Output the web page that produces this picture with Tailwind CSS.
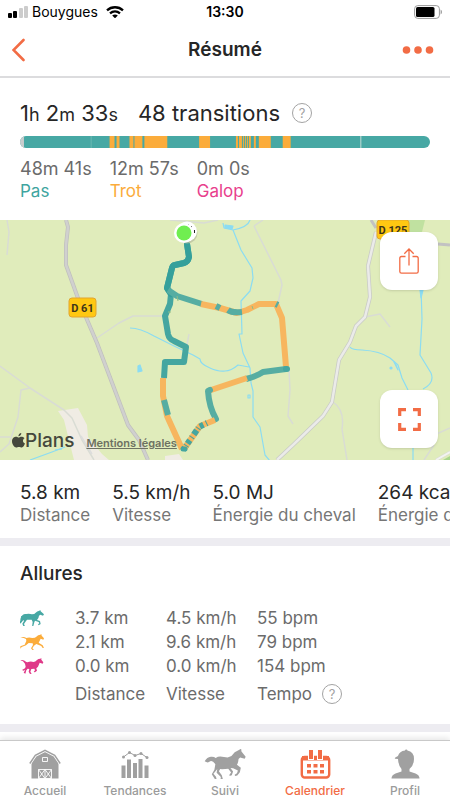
<!DOCTYPE html>
<html lang="fr">

<head>
  <meta charset="UTF-8">
  <meta name="viewport" content="width=device-width, initial-scale=1.0">
  <title>Résumé</title>
  <script src="https://cdn.jsdelivr.net/npm/@tailwindcss/browser@4"></script>
</head>

<body class="bg-white font-['Inter','Liberation_Sans',sans-serif] text-[#262626] min-h-screen flex flex-col overflow-x-hidden">

  <!-- Barre d'état -->
  <div class="grid grid-cols-3 items-center h-6 px-2 text-[13px] text-black">
    <div class="flex items-center gap-1">
      <svg class="w-5 h-3" viewBox="0 0 20 12" aria-hidden="true">
        <rect x="0" y="7" width="4" height="5" rx="1" />
        <rect x="5" y="5" width="4" height="7" rx="1" />
        <rect x="11" y="2" width="4" height="10" rx="1" fill="#ccc" />
        <rect x="16" y="0" width="4" height="12" rx="1" fill="#ccc" />
      </svg>
      <span class="text-sm">Bouygues</span>
      <svg class="w-[18px] h-3 ml-1 shrink-0" viewBox="0 0 18 12" fill="none" stroke="#000" stroke-width="2.3" aria-hidden="true">
        <path d="M1 4.3C5.5.2 12.5.2 17 4.3M4 7.4c3-2.6 7-2.6 10 0" />
        <path d="M6.2 9.6c1.6-1.4 4-1.4 5.6 0L9 12.3z" fill="#000" stroke="none" />
      </svg>
    </div>
    <span class="text-center text-sm font-semibold">13:30</span>
    <svg class="w-7 h-[14px] justify-self-end" viewBox="0 0 28 14" aria-hidden="true">
      <rect x=".6" y=".6" width="24.8" height="12.8" rx="3.2" fill="none" stroke="#999" />
      <rect x="2" y="2" width="18.500" height="10" rx="1.6" />
      <path d="M26.600 4.500q1.400.6 1.400 2.500t-1.400 2.500z" fill="#999" />
    </svg>
  </div>

  <!-- Header -->
  <header class="grid grid-cols-[1fr_auto_1fr] items-center h-[54px] px-2 border-b-2 border-[#dcdcde]">
    <button aria-label="Retour" class="justify-self-start pl-1">
      <svg class="w-4 h-6" viewBox="0 0 16 24" fill="none" stroke="#f26c45" stroke-width="2.600" stroke-linecap="round">
        <path d="M11.500 2 1.500 12l10 10" />
      </svg>
    </button>
    <h1 class="text-[19px] font-semibold">Résumé</h1>
    <button aria-label="Options" class="justify-self-end pr-2">
      <svg class="w-8 h-2" viewBox="0 0 32 8" fill="#f26c45">
        <circle cx="4.500" cy="4" r="3.800" />
        <circle cx="16" cy="4" r="3.800" />
        <circle cx="27.500" cy="4" r="3.800" />
      </svg>
    </button>
  </header>

  <main>
    <!-- Durée et transitions -->
    <section class="px-5 pt-5 h-[142px]">
      <div class="flex items-center h-[30px] text-[22px]">
        <p class="whitespace-nowrap">1<span class="text-lg">h</span> 2<span class="text-lg">m</span> 33<span class="text-lg">s</span></p>
        <p class="ml-5 whitespace-nowrap">48 transitions</p>
        <button aria-label="Aide sur les transitions" class="ml-3 w-5 h-5 rounded-full border border-[#a3a3a3] text-[#a3a3a3] text-[13px] leading-none">?</button>
      </div>
      <svg class="block w-full h-3 mt-2 rounded-full" viewBox="0 0 412 12" preserveAspectRatio="none" aria-hidden="true">
        <rect width="412" height="12" fill="#47a8a4" />
        <rect width="4" height="12" fill="#c9cdce" />
        <path d="M71.500 0v12" stroke="#6bb8b2" />
        <path d="M90 0h5v12h-5zM97 0h3v12h-3zM110 0h4v12h-4zM115 0h8v12h-8zM125 0h23v12h-23zM180 0h11v12h-11zM217 0h2v12h-2zM220 0h3v12h-3zM224 0h1v12h-1zM226 0h1v12h-1zM228 0h1v12h-1zM230 0h2v12h-2zM235 0h2v12h-2zM240 0h12v12h-12zM264 0h8v12h-8z" fill="#fbac3b" />
        <path d="M342.500 0v12" stroke="#c5dcd5" />
      </svg>
      <dl class="flex gap-[18px] mt-[10px] text-lg leading-[22px] text-[#6b6b6b]">
        <div class="flex flex-col-reverse">
          <dt class="text-[17px] leading-[22px] text-[#3ea5a0]">Pas</dt>
          <dd>48m 41s</dd>
        </div>
        <div class="flex flex-col-reverse">
          <dt class="text-[17px] leading-[22px] text-[#fbac3b]">Trot</dt>
          <dd>12m 57s</dd>
        </div>
        <div class="flex flex-col-reverse">
          <dt class="text-[17px] leading-[22px] text-[#e8408c]">Galop</dt>
          <dd>0m 0s</dd>
        </div>
      </dl>
    </section>

    <!-- Carte du parcours -->
    <section class="relative h-60 bg-[#e0ecbb] overflow-hidden">
      <svg class="block w-full h-full" viewBox="0 0 450 240" preserveAspectRatio="xMidYMid slice" fill="none" stroke-linejoin="round" role="img" aria-label="Parcours">
        <path d="M408 0h17l-3 12h-14z" fill="#c0e1a0" />
        <path d="m443 240 7-4v4z" fill="#a9d68c" />
        <path d="m58 191 20-3 9 17 1 12 14 17 7 6H74l-10-40zM165 236l14-2 4 6h-18z" fill="#f0ece4" />

        <!-- Chemins -->
        <g stroke="#d9dcd4" stroke-width="1.500">
          <path d="m7 0 2 12-2 23M170 0l34 3 14-3M97 118l22-15 14-7h32M0 146l30 22 34 22 8 8 10 22 12 20M30 168l-9 2-3 27-9 27-9 8M0 217h10M189 114l-3 16M254 6l27 54 1 5-4 18M254 6l9-6M289 150l1 20-2 26 5 8M365 97l15-3 10 13M333 182q12 8 9 27l5 31M450 208l-18 8M434 225l-10 15" />
          <path d="m81 216 6 10M86 224l6 10" stroke="#ddd" />
        </g>
        <path d="M371 0l5 8M438 24l12 1" stroke="#c2c2c2" stroke-width="3" />
        <path d="m66 0 2 7-2 18v20l13 36 18 42 31 82 11 15 9 20" stroke="#c0c0bd" stroke-width="4" />
        <path d="m66 0 2 7-2 18v20l13 36 18 42 31 82 11 15 9 20" stroke="#d0d0cf" stroke-width="2.500" />
        <path d="m376 12-8 34 2 31-5 20-9 9-6 16-11 18-7 42-9 14-30 29-16 15" stroke="#c9cbc6" stroke-width="4" />
        <path d="m376 12-8 34 2 31-5 20-9 9-6 16-11 18-7 42-9 14-30 29-16 15" stroke="#ebebe9" stroke-width="2.500" />
        <path d="m450 232-14 8" stroke="#d9dcd4" stroke-width="3" />
        <path d="m450 232-14 8" stroke="#f3f3f0" stroke-width="2" />

        <!-- Cours d'eau -->
        <g stroke="#8bdcf2" stroke-width="1.200">
          <path d="M130 108q10 0 24 8l20 10 19 9 7 4q0 5 10 9 9 4 15 3 6 0 13-6l11 2M223 3l1 5 9 2q15-3 17-10M233 10l8 20 11 18 1 10-3 13-9 10 1 33h-3l4 19 7 15 1 15 2 8v26l7 10 5 28 5 6 8 1M350 127q2 3 12 3 18 1 28 8l8 7 4 13 6 12M421 68l1 31-2 36 11 18q4 10-8 16M413 228v12M30 240l22-8 13-5" />
          <path d="m225 5 8 1-1 3-7-1zM138 146l2-1 2 6-4 1zM394 142l2 3 2 5zM420 70h3l-2 8zM55 230l7-1" fill="#8bdcf2" />
          <circle cx="391" cy="148" r="1" fill="#8bdcf2" />
          <path d="M248 175h2v3h-2z" />
        </g>

        <!-- Tracé -->
        <g stroke-width="6">
          <path d="m187 24 2 13q-1 5-5 6l-9 2q-2 0-3 3l-5 20 4 6-1 10-5 12 3 18q1 5 6 7l12 6-2 15h-19l-1 16" stroke="#45a6a0" />
          <path d="m187 24 2 13q-1 5-5 6l-9 2q-2 0-3 3l-5 20 4 6" stroke="#35a09b" stroke-linecap="round" />
          <path d="m168 70 9 6 25 8" stroke="#56ada2" />
          <path d="m201 84 19 4 17 5 10-3 12-6h17l6 14 4 49" stroke="#f7b65f" />
          <path d="m163 158 0 18 4 20 15 33" stroke="#f7b65f" />
          <path d="m164 180 4 15M228 90q4 3 14 2M276 84l2 1M216 86l4 2" stroke="#56ada2" />
          <path d="m252 86 1 3M171 92h-3M177 76l1 5" stroke="#8fbd86" stroke-width="1" />
          <path d="m286 149-23 3q-6 4-17 7" stroke="#56ada2" />
          <path d="m286 149 1 0" stroke="#45a6a0" stroke-linecap="round" />
          <path d="m247 158-39 13" stroke="#f7b65f" />
          <path d="m210 170-2 1q1 16 8 28" stroke="#56ada2" stroke-linecap="round" />
          <path d="m215 200-15 6-16 23" stroke="#f7b65f" />
          <path d="m207 203-8 4-16 23" stroke="#45a6a0" stroke-dasharray="1 3 4 2 1 2 5 3" />
          <path d="m183 229 2 0" stroke="#45a6a0" stroke-width="5" stroke-linecap="round" />
        </g>

        <!-- Arrivée et départ -->
        <circle cx="187" cy="13" r="10.500" fill="#b6bd9d" opacity=".7" />
        <circle cx="187" cy="11.500" r="10" fill="#fff" />
        <path d="M188 4h1v1h-1zM191 6h1v2h-1zM194 10h1v3h-1z" fill="#222" />
        <circle cx="184" cy="13" r="10" fill="#fff" />
        <circle cx="184" cy="13" r="7.500" fill="#70ee50" />

        <!-- Panneaux routiers -->
        <g stroke="#e2a52f" fill="#ffc812">
          <rect x="69" y="78" width="27" height="19" rx="3" />
          <rect x="377" y="0" width="32" height="19" rx="3" />
        </g>
        <g font-family="Roboto, sans-serif" font-size="11" font-weight="700" fill="#3d3519" text-anchor="middle">
          <text x="82.500" y="92">D 61</text>
          <text x="393" y="14">D 125</text>
        </g>
      </svg>

      <div class="absolute left-3 bottom-[9px] flex items-center text-[#45483c]">
        <svg class="w-[13px] h-[15px]" viewBox="0 0 13 15" fill="currentColor" aria-hidden="true">
          <path d="M9.300 0c.1 1.800-1.300 3.300-2.900 3.300C6.200 1.700 7.700.2 9.300 0zM12.500 5.200c-2.200 1.300-1.900 4.300.5 5.300-.6 1.700-1.900 4-3.200 4-1 0-1.500-.6-2.800-.6s-1.900.6-2.800.6C2.300 14.500 0 11.300 0 8.300c0-4.500 4.400-5.200 5.700-4.100.6.4 1.200.4 1.900 0 1.700-.9 3.900-.4 4.900 1z" />
        </svg>
        <span class="text-[19px] leading-5 font-medium">Plans</span>
        <a href="#" class="ml-3 mt-1 text-[11px] font-semibold underline text-[#6d7162]">Mentions légales</a>
      </div>

      <button aria-label="Partager" class="absolute right-3 top-3 w-[58px] h-[58px] rounded-xl bg-white shadow-sm flex items-center justify-center">
        <svg class="w-5 h-[26px]" viewBox="0 0 20 26" fill="none" stroke="#f26c45" stroke-width="1.300">
          <path d="M6.500 8.500H2.500Q.8 8.500.8 10.200v13.300q0 1.700 1.700 1.700h15q1.700 0 1.700-1.700V10.200q0-1.700-1.700-1.700h-4M10 17.500V1.200M5.300 5.700 10 1l4.700 4.700" />
        </svg>
      </button>
      <button aria-label="Plein écran" class="absolute right-3 bottom-3 w-[58px] h-[58px] rounded-xl bg-white shadow-sm flex items-center justify-center">
        <svg class="w-[23px] h-[23px]" viewBox="0 0 23 23" fill="none" stroke="#f26c45" stroke-width="3.200">
          <path d="M8 1.700H1.700V8M15 1.700h6.300V8M1.700 15v6.300H8M21.300 15v6.300H15" />
        </svg>
      </button>
    </section>

    <!-- Statistiques -->
    <section class="overflow-hidden border-b-8 border-[#edecf1] h-[86px] pt-[21px] pl-5">
      <dl class="flex gap-[22px] whitespace-nowrap text-[17px] leading-[23px]">
        <div class="flex flex-col-reverse shrink-0">
          <dt class="text-[#767676]">Distance</dt>
          <dd class="text-[19px]">5.8 km</dd>
        </div>
        <div class="flex flex-col-reverse shrink-0">
          <dt class="text-[#767676]">Vitesse</dt>
          <dd class="text-[19px]">5.5 km/h</dd>
        </div>
        <div class="flex flex-col-reverse shrink-0">
          <dt class="text-[#767676]">Énergie du cheval</dt>
          <dd class="text-[19px]">5.0 MJ</dd>
        </div>
        <div class="flex flex-col-reverse shrink-0">
          <dt class="text-[#767676]">Énergie du cavalier</dt>
          <dd class="text-[19px]">264 kcal</dd>
        </div>
      </dl>
    </section>

    <!-- Allures -->
    <section class="px-5 pt-[14px] h-[186px] border-b-8 border-[#edecf1]">
      <h2 class="text-[19px] leading-7 font-medium">Allures</h2>
      <table class="mt-[18px] text-[17px] leading-6 text-[#6b6b6b] text-left whitespace-nowrap table-fixed w-[330px]">
        <colgroup>
          <col class="w-[55px]">
          <col class="w-[91px]">
          <col class="w-[91px]">
          <col>
        </colgroup>
        <tbody>
          <tr>
            <td>
              <svg class="w-6 h-4" viewBox="0 0 72 48" fill="#47a8a4" role="img" aria-label="Pas">
                <path d="M1 29C3 18 8 12 19 12q9-2 17 1 8 0 11-5 4-5 11-6l3-2 1 4 10 9-3 4-8-3-4 3q-1 9-6 13l9 3 2 9-6 4-2-3 4-3-2-4-11-4-2 5-3 11h4l-1 3h-7l2-15-3-7-14 0-5 7-4 6 3 7h-5l-3-8 5-8-2-3-5 7-8 7-5-2 7-5 5-11-1-8Q7 20 7 29l-6 6z" />
              </svg>
            </td>
            <td>3.7 km</td>
            <td>4.5 km/h</td>
            <td>55 bpm</td>
          </tr>
          <tr>
            <td>
              <svg class="w-6 h-4" viewBox="0 0 72 48" fill="#fbac3b" role="img" aria-label="Trot">
                <path d="M1 12q9-6 18 0 8-3 18 0 9 0 12-4 5-6 12-6l3-2 1 5 7 8-2 4-8-3-6 12 12 8 4 8-5-1-3-5-15-6-7 5-5 8 5 4-5 1-4-5 6-10-1-5-12-1-8 7-13 5-4 5 0-7 13-5 5-11-1-6Q8 10 1 12z" />
              </svg>
            </td>
            <td>2.1 km</td>
            <td>9.6 km/h</td>
            <td>79 bpm</td>
          </tr>
          <tr>
            <td>
              <svg class="w-6 h-4" viewBox="0 0 72 48" fill="#df3988" role="img" aria-label="Galop">
                <path d="M1 7q9-3 18 5l3 1q10-4 18-1 6 0 11-6 4-4 10-4l3-2 0 5 6 8-2 4-9-3-5 12-5 5 2 7-6 5-4-1 4-5-2-5-9 1-3 8 4 6-5 1-4-7 2-8-5-1-4 5-3 10-5-3 5-9-5 3-5-2 9-5 2-5-2-9Q10 8 1 7z" />
              </svg>
            </td>
            <td>0.0 km</td>
            <td>0.0 km/h</td>
            <td>154 bpm</td>
          </tr>
        </tbody>
        <tfoot>
          <tr>
            <td></td>
            <th scope="col" class="font-normal pt-1">Distance</th>
            <th scope="col" class="font-normal pt-1">Vitesse</th>
            <th scope="col" class="font-normal pt-1">
              <span class="flex items-center gap-[10px]">Tempo
                <button aria-label="Aide sur le tempo" class="w-5 h-5 rounded-full border border-[#a3a3a3] text-[#a3a3a3] text-[13px] leading-none">?</button>
              </span>
            </th>
          </tr>
        </tfoot>
      </table>
    </section>
  </main>

  <!-- Navigation -->
  <nav class="mt-auto sticky bottom-0 grid grid-cols-5 h-[60px] bg-white border-t border-[#c9c9c9] shadow-[0_-2px_6px_rgba(0,0,0,0.1)] text-xs font-medium text-[#9b9b9b]">
    <a href="#" class="flex flex-col items-center pt-2 gap-1">
      <svg class="w-8 h-[30px]" viewBox="0 0 32 30" fill="#a0a0a0" aria-hidden="true">
        <path d="M2.500 12 7 4.500 16 1l9 3.500 4.500 7.500v17.500h-27z" />
        <path d="M.8 13.500 6.300 6.800 16 .8l9.700 6 5.500 6.700V0H.8z" fill="#fff" />
        <path d="M.8 14.500 6.300 6.300 16 1.300l9.700 5 5.500 8.200" fill="none" stroke="#fff" stroke-width="3" />
        <path d="M.8 14.500 6.300 6.300 16 1.300l9.700 5 5.500 8.200" fill="none" stroke="#a0a0a0" stroke-width="1.400" />
        <path d="M13.500 8.500h5v4h-5zM9.500 20.500h13v9h-13zM16 20.500v9M9.500 20.500l6.500 9M16 20.500l-6.500 9M16 20.500l6.500 9M22.500 20.500l-6.500 9" fill="none" stroke="#fff" stroke-width=".9" />
      </svg>
      <span>Accueil</span>
    </a>
    <a href="#" class="flex flex-col items-center pt-2 gap-1">
      <svg class="w-7 h-[30px]" viewBox="0 0 28 30" fill="#a0a0a0" aria-hidden="true">
        <path d="M.5 16.500h4V29h-4zM6 10.500h4V29H6zM12 14h4v15h-4zM17.500 10h4v19h-4zM23.500 16.500h4V29h-4z" />
        <path d="m2.500 8 6-4.500L14 6.500l6-2 6 4" fill="none" stroke="#a0a0a0" />
        <circle cx="2.500" cy="8" r="1.500" />
        <circle cx="8.500" cy="3.500" r="1.500" />
        <circle cx="14" cy="6.500" r="1.500" />
        <circle cx="20" cy="4.500" r="1.500" />
        <circle cx="26" cy="8.500" r="1.500" />
      </svg>
      <span>Tendances</span>
    </a>
    <a href="#" class="flex flex-col items-center pt-2 gap-1">
      <svg class="w-[43px] h-[30px]" viewBox="0 0 129 93" fill="#a0a0a0" aria-hidden="true">
        <path d="M0 38q7-13 19-14 10-1 15 4 9-6 20-4l17 2 12-4 10-12 13-7 7-4 1 9 13 16-3 6-14-4-5 5q-1 12-5 18l12 9-3 14-8 10-7 2-1-4 7-5 3-8-15-7-8-1 8 11-4 11-7 3 0-5 5-6-9-12-19 2-6-1-4 7 9 12 4 15-6 6-2-6 1-9-13-13 2-12-6 8-6 7 8 9 2 8-5 0-10-16 8-14 3-17Q24 34 17 38 10 45 0 38z" />
      </svg>
      <span>Suivi</span>
    </a>
    <a href="#" aria-current="page" class="flex flex-col items-center pt-2 gap-1 text-[#f26c45]">
      <svg class="w-[31px] h-[30px]" viewBox="0 0 31 30" aria-hidden="true">
        <rect x="1.800" y="8" width="27.400" height="20.500" rx="3" fill="none" stroke="#f26c45" stroke-width="2.400" />
        <path d="M2 7h27v4.500H2z" fill="#f26c45" />
        <path d="M9 1h4v9H9zM18 1h4v9h-4z" fill="#f26c45" stroke="#fff" stroke-width="2" paint-order="stroke" />
        <path d="M7 15h4v3.500H7zM13.500 15h4v3.500h-4zM20 15h4v3.500h-4zM7 21h4v3.500H7zM13.500 21h4v3.500h-4zM20 21h4v3.500h-4z" fill="#f26c45" />
      </svg>
      <span>Calendrier</span>
    </a>
    <a href="#" class="flex flex-col items-center pt-2 gap-1">
      <svg class="w-[29px] h-[30px]" viewBox="0 0 29 30" fill="#a0a0a0" aria-hidden="true">
        <path d="M14 1.500q0-1 1.200-1t1.200 1q6.600 1 6.600 8.500-.3 7-4.500 10v2.500l6 2q4 1.500 4 5H.5q0-3.500 4-5l6-2V20q-3-3-3.500-10l-3-.3q-1-1.200 3-2.700Q8.500 2 14 1.500z" />
      </svg>
      <span>Profil</span>
    </a>
  </nav>

</body>

</html>
